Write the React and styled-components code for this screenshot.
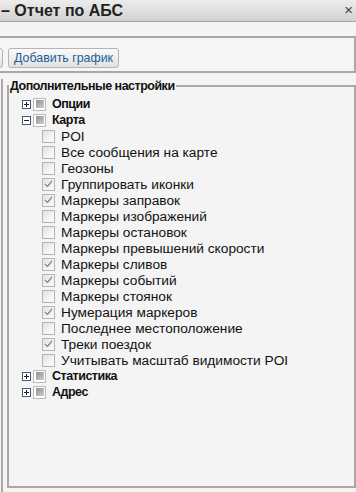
import React from "react";
import styled, { createGlobalStyle } from "styled-components";

const GlobalStyle = createGlobalStyle`
  html, body {
    margin: 0;
    padding: 0;
    background: #f4f4f4;
  }
  body {
    font-family: "Liberation Sans", Arial, sans-serif;
    overflow: hidden;
  }
`;

const mapItems = [
  { label: "POI", checked: false },
  { label: "Все сообщения на карте", checked: false },
  { label: "Геозоны", checked: false },
  { label: "Группировать иконки", checked: true },
  { label: "Маркеры заправок", checked: true },
  { label: "Маркеры изображений", checked: false },
  { label: "Маркеры остановок", checked: false },
  { label: "Маркеры превышений скорости", checked: false },
  { label: "Маркеры сливов", checked: true },
  { label: "Маркеры событий", checked: true },
  { label: "Маркеры стоянок", checked: false },
  { label: "Нумерация маркеров", checked: true },
  { label: "Последнее местоположение", checked: false },
  { label: "Треки поездок", checked: true },
  { label: "Учитывать масштаб видимости POI", checked: false },
];

const groups = [
  { label: "Опции", open: false },
  { label: "Карта", open: true, items: mapItems },
  { label: "Статистика", open: false },
  { label: "Адрес", open: false },
];

const Expander = ({ open }) => (
  <StyledExpander>
    <svg width="9" height="9" viewBox="0 0 9 9">
      <rect x="0.5" y="0.5" width="8" height="8" fill="#fff" stroke="#4a5878" />
      <line x1="2" y1="4.5" x2="7" y2="4.5" stroke="#1c2438" />
      {!open && <line x1="4.5" y1="2" x2="4.5" y2="7" stroke="#1c2438" />}
    </svg>
  </StyledExpander>
);

const CheckBox = ({ checked }) => (
  <StyledCheck>
    {checked && (
      <svg width="9" height="8" viewBox="0 0 9 8">
        <path d="M1 4 L3.5 6.5 L8 1" fill="none" stroke="#8a8a8a" strokeWidth="1.4" />
      </svg>
    )}
  </StyledCheck>
);

const App = () => {
  return (
    <Page>
      <GlobalStyle />
      <TitleBar>
        <Title>– Отчет по АБС</Title>
        <Close>×</Close>
      </TitleBar>
      <Body>
        <Toolbar>
          <ToolButton $width="50px" aria-label="Удалить" />
          <ToolButton>Добавить график</ToolButton>
        </Toolbar>
        <Panel>
          <Fieldset>
            <Legend>Дополнительные настройки</Legend>
            <Tree>
              {groups.map((group) => (
                <React.Fragment key={group.label}>
                  <GroupRow>
                    <Expander open={group.open} />
                    <TriState />
                    <GroupLabel>{group.label}</GroupLabel>
                  </GroupRow>
                  {group.open &&
                    group.items.map((item) => (
                      <ItemRow key={item.label}>
                        <CheckBox checked={item.checked} />
                        <ItemLabel>{item.label}</ItemLabel>
                      </ItemRow>
                    ))}
                </React.Fragment>
              ))}
            </Tree>
          </Fieldset>
        </Panel>
      </Body>
    </Page>
  );
};

const Page = styled.div`
  width: 356px;
  height: 492px;
  overflow: hidden;
  display: flex;
  flex-direction: column;
  background: #f4f4f4;
`;

const TitleBar = styled.div`
  height: 21px;
  display: flex;
  align-items: center;
  justify-content: space-between;
  background: linear-gradient(to bottom, #ececec, #d2d2d2);
  border-bottom: 1px solid #a6a6a6;
`;

const Title = styled.div`
  font-size: 16px;
  font-weight: bold;
  color: #222;
  padding-left: 1px;
  line-height: 21px;
`;

const Close = styled.div`
  font-size: 15px;
  color: #444;
  padding-right: 3px;
  line-height: 15px;
  margin-top: -3px;
`;

const Body = styled.div`
  flex: 1;
  display: flex;
  flex-direction: column;
  padding-top: 14px;
`;

const Toolbar = styled.div`
  box-sizing: border-box;
  height: 37px;
  margin-left: -49px;
  display: flex;
  align-items: flex-end;
  gap: 5px;
  padding-bottom: 3px;
  border: 2px solid #a8a8a8;
  background: #f5f5f5;
`;

const ToolButton = styled.button`
  box-sizing: border-box;
  height: 20px;
  width: ${(p) => p.$width || "auto"};
  padding: 0 5px;
  font-family: "Liberation Sans", Arial, sans-serif;
  font-size: 12.4px;
  color: #1e5f96;
  background: linear-gradient(to bottom, #fafafa, #e2e2e2);
  border: 1px solid #b4b4b4;
  border-radius: 3px;
  line-height: 16px;
  cursor: pointer;
`;

const Panel = styled.div`
  flex: 1;
  margin-top: 6px;
  margin-left: 1px;
  border-left: 2px solid #a8a8a8;
  padding-left: 4px;
  display: flex;
  padding-bottom: 4px;
`;

const Fieldset = styled.fieldset`
  flex: 1;
  margin: 0;
  padding: 0 0 0 13px;
  border: 2px solid #a8a8a8;
`;

const Legend = styled.legend`
  font-size: 12.5px;
  letter-spacing: -0.5px;
  font-weight: bold;
  color: #111;
  padding: 0 1px;
  margin-left: -13px;
`;

const Tree = styled.div`
  display: flex;
  flex-direction: column;
  padding-top: 3px;
`;

const Row = styled.div`
  height: 16px;
  display: flex;
  align-items: center;
  font-size: 13.7px;
  color: #111;
  white-space: nowrap;
`;

const GroupRow = styled(Row)``;

const ItemRow = styled(Row)`
  padding-left: 20px;
`;

const StyledExpander = styled.span`
  width: 9px;
  height: 9px;
  display: flex;
  margin-right: 2px;
`;

const TriState = styled.span`
  width: 11px;
  height: 11px;
  border: 1px solid #b8b8b8;
  background: #fff;
  display: flex;
  align-items: center;
  justify-content: center;
  &::after {
    content: "";
    width: 8px;
    height: 8px;
    background: linear-gradient(135deg, #8f8f8f, #cfcfcf);
  }
`;

const GroupLabel = styled.span`
  font-weight: bold;
  font-size: 12.5px;
  letter-spacing: -0.5px;
  margin-left: 6px;
`;

const StyledCheck = styled.span`
  width: 11px;
  height: 11px;
  border: 1px solid #b4b4b4;
  background: linear-gradient(135deg, #e4e4e4, #fdfdfd);
  display: flex;
  align-items: center;
  justify-content: center;
`;

const ItemLabel = styled.span`
  margin-left: 6px;
`;

export default App;
